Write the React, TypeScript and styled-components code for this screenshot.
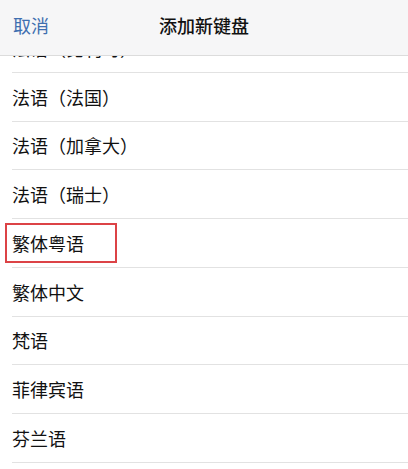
import styled, { createGlobalStyle } from "styled-components";

const GlobalStyle = createGlobalStyle`
  html, body {
    margin: 0;
    padding: 0;
    background: #ffffff;
  }
  body {
    font-family: "Noto Sans CJK SC", "Noto Sans", sans-serif;
  }
`;

const Screen = styled.div`
  width: 408px;
  height: 469px;
  display: flex;
  flex-direction: column;
  overflow: hidden;
  background: #fff;
`;

const NavBar = styled.div`
  height: 55px;
  flex: none;
  display: grid;
  grid-template-columns: 1fr auto 1fr;
  align-items: center;
  padding: 0 13px;
  background: #f6f6f7;
  border-bottom: 1px solid #dcdcdc;
`;

const CancelButton = styled.button`
  justify-self: start;
  border: none;
  background: none;
  padding: 0;
  font-family: inherit;
  font-size: 18px;
  color: #3f6fb0;
  margin-top: -6px;
`;

const Title = styled.div`
  font-size: 18px;
  font-weight: 500;
  color: #111;
  margin-top: -6px;
`;

const Viewport = styled.div`
  flex: 1;
  overflow: hidden;
`;

const List = styled.div`
  margin-top: -32px;
  padding-left: 12px;
`;

const Row = styled.div`
  height: 48.75px;
  box-sizing: border-box;
  display: flex;
  align-items: center;
  border-bottom: 1px solid #e2e2e2;
  font-size: 18px;
  color: #111;
`;

const Label = styled.span<{ $marked?: boolean }>`
  margin-left: -7px;
  padding: 6px 31px 6px 5px;
  border: 2.5px solid ${(p) => (p.$marked ? "#dc4346" : "transparent")};
  line-height: 24px;
`;

const items = [
  "法语（比利时）",
  "法语（法国）",
  "法语（加拿大）",
  "法语（瑞士）",
  "繁体粤语",
  "繁体中文",
  "梵语",
  "菲律宾语",
  "芬兰语",
];

export default function App() {
  return (
    <>
      <GlobalStyle />
      <Screen>
        <NavBar>
          <CancelButton>取消</CancelButton>
          <Title>添加新键盘</Title>
          <span />
        </NavBar>
        <Viewport>
          <List>
            {items.map((name) => (
              <Row key={name}>
                <Label $marked={name === "繁体粤语"}>{name}</Label>
              </Row>
            ))}
          </List>
        </Viewport>
      </Screen>
    </>
  );
}
